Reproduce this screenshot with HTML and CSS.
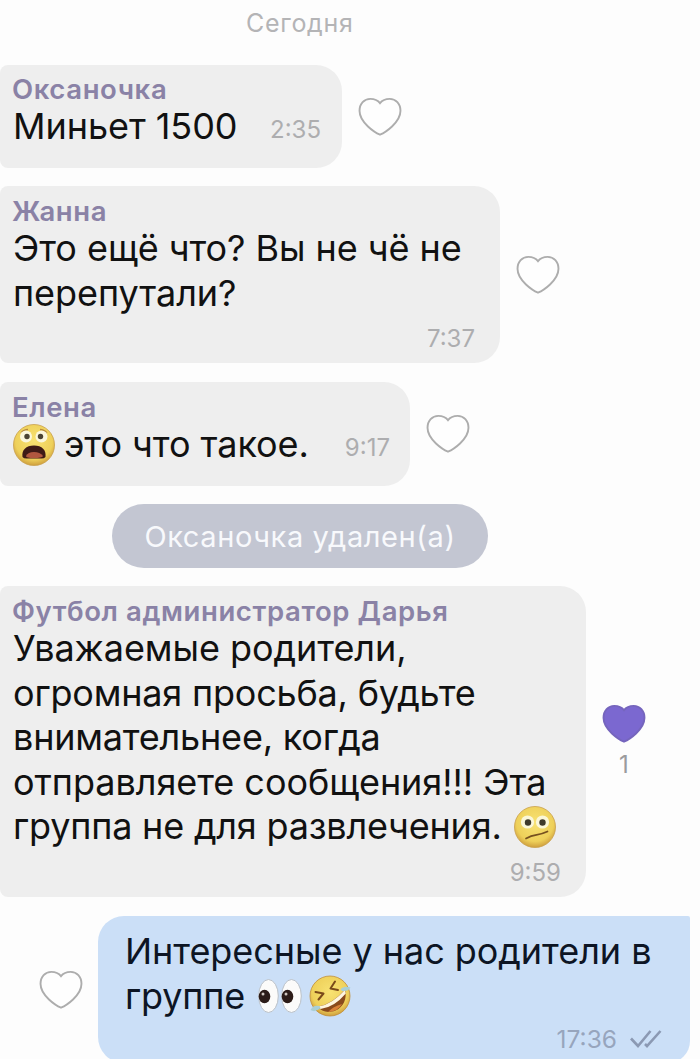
FILE: index.html
```html
<!DOCTYPE html>
<html lang="ru">
<head>
    <meta charset="UTF-8">
    <meta name="viewport" content="width=device-width, initial-scale=1.0">
    <title>Чат</title>
    <link rel="stylesheet" href="styles.css">
</head>
<body>
    <!-- shared icons -->
    <svg class="sprite" width="0" height="0">
        <symbol id="heart" viewBox="0 0 46 42">
            <path d="M23 39.500C18 37.500 1.500 27 1.500 14.500C1.500 7 6.500 2 12.800 2C17.500 2 20.500 3.200 23 6.500C25.500 3.200 28.500 2 33.200 2C39.500 2 44.500 7 44.500 14.500C44.500 27 28 37.500 23 39.500Z"/>
        </symbol>
        <radialGradient id="face" cx="50%" cy="40%" r="60%">
            <stop offset="0" stop-color="#f8e272"/>
            <stop offset="0.75" stop-color="#eed05a"/>
            <stop offset="1" stop-color="#cf9f3d"/>
        </radialGradient>
    </svg>

    <main class="chat">
        <div class="date">Сегодня</div>

        <div class="row row-1">
            <div class="bubble">
                <div class="name">Оксаночка</div>
                <div class="inline">
                    <p class="text"><span class="line">Миньет 1500</span></p>
                    <span class="time">2:35</span>
                </div>
            </div>
            <svg class="heart"><use href="#heart"/></svg>
        </div>

        <div class="row row-2">
            <div class="bubble">
                <div class="name">Жанна</div>
                <p class="text">
                    <span class="line">Это ещё что? Вы не чё не</span>
                    <span class="line">перепутали?</span>
                </p>
                <div class="time">7:37</div>
            </div>
            <svg class="heart"><use href="#heart"/></svg>
        </div>

        <div class="row row-3">
            <div class="bubble">
                <div class="name">Елена</div>
                <div class="inline">
                    <p class="text"><span class="line"><svg class="emoji scared" viewBox="0 0 42 42">
                        <circle cx="21" cy="21" r="20.500" fill="url(#face)" stroke="#c9a04a" stroke-width="0.800"/>
                        <path d="M8 9Q11 5.500 15 5.500M27 5.500Q31 5.500 34 9" fill="none" stroke="#b98b3c" stroke-width="1.400"/>
                        <circle cx="13" cy="12.500" r="6" fill="#fbf7dc"/>
                        <circle cx="28.500" cy="12.500" r="6" fill="#fbf7dc"/>
                        <circle cx="14" cy="12.500" r="2.700" fill="#4b4434"/>
                        <circle cx="27.500" cy="12.500" r="2.700" fill="#4b4434"/>
                        <path d="M9.500 33C8.500 26 13 21.500 21 21.500S33.500 26 32.500 33Q31 35 27 34.500H15Q11 35 9.500 33Z" fill="#3e1a16"/>
                        <path d="M13 32Q15 28 21 28T30 32Q29 34 21 34T13 32Z" fill="#b0573f"/>
                    </svg>это что такое.</span></p>
                    <span class="time">9:17</span>
                </div>
            </div>
            <svg class="heart"><use href="#heart"/></svg>
        </div>

        <div class="system"><span>Оксаночка удален(а)</span></div>

        <div class="row row-4">
            <div class="bubble">
                <div class="name">Футбол администратор Дарья</div>
                <p class="text">
                    <span class="line">Уважаемые родители,</span>
                    <span class="line tight">огромная просьба, будьте</span>
                    <span class="line tight">внимательнее, когда</span>
                    <span class="line">отправляете сообщения!!! Эта</span>
                    <span class="line tight">группа не для развлечения.<svg class="emoji unsure" viewBox="0 0 42 42">
                        <circle cx="21" cy="21" r="20.500" fill="url(#face)" stroke="#c9a04a" stroke-width="0.800"/>
                        <circle cx="13.500" cy="16" r="6.600" fill="#fbf7d8"/>
                        <circle cx="28.500" cy="16" r="6.600" fill="#fbf7d8"/>
                        <circle cx="14" cy="16.500" r="3.200" fill="#3f3a2b"/>
                        <circle cx="28.500" cy="16.500" r="3.200" fill="#3f3a2b"/>
                        <path d="M12 32.500Q17 29.500 22.500 28.800T33.500 25.500" fill="none" stroke="#76501f" stroke-width="1.700" stroke-linecap="round"/>
                    </svg></span>
                </p>
                <div class="time">9:59</div>
            </div>
            <div class="reaction">
                <svg class="heart liked"><use href="#heart"/></svg>
                <span class="count">1</span>
            </div>
        </div>

        <div class="row row-5 own">
            <svg class="heart"><use href="#heart"/></svg>
            <div class="bubble">
                <p class="text">
                    <span class="line">Интересные у нас родители в</span>
                    <span class="line tight">группе<svg class="emoji eyes" viewBox="0 0 44 36">
                        <ellipse cx="10.500" cy="18" rx="9.800" ry="16.500" fill="#fbfbfa" stroke="#b9c0c8" stroke-width="1"/>
                        <ellipse cx="33.500" cy="18" rx="9.800" ry="16.500" fill="#fbfbfa" stroke="#b9c0c8" stroke-width="1"/>
                        <ellipse cx="6.500" cy="18.500" rx="5.800" ry="6.800" fill="#2c1c18"/>
                        <ellipse cx="29.500" cy="18.500" rx="5.800" ry="6.800" fill="#2c1c18"/>
                        <circle cx="5" cy="16" r="1.500" fill="#cfc6c0"/>
                        <circle cx="28" cy="16" r="1.500" fill="#cfc6c0"/>
                    </svg><svg class="emoji rofl" viewBox="0 0 42 42">
                        <circle cx="21" cy="21" r="20" fill="url(#face)" stroke="#c08e3a" stroke-width="0.800"/>
                        <path d="M6.500 17L14.500 18.500L9.500 24.500M26 6.500L21.500 13.500L29 15" fill="none" stroke="#7a4a1a" stroke-width="2" stroke-linecap="round" stroke-linejoin="round"/>
                        <path d="M9 31.500Q23 29.500 36 14.500C38.500 24 34 32.500 26.500 35.500S12 36.500 9 31.500Z" fill="#8a4a1c"/>
                        <path d="M9.500 31.500Q23 29.500 35.800 15L36.800 18.500Q25 32.500 11.500 34Z" fill="#fff6df"/>
                        <path d="M19 37Q24 31.500 33 29Q29 36.500 19 37Z" fill="#d98038"/>
                        <path d="M31.500 14Q36 10.500 41.500 12.500Q39.500 16.500 33 16ZM10.500 31Q4 29.500 1.500 35Q6 38 11.500 33Z" fill="#a9cfd6"/>
                    </svg></span>
                </p>
                <div class="time">17:36
                    <svg class="checks" viewBox="0 0 34 20">
                        <path d="M2 9.500L9 17L21.500 2M16 15L18 17L31.500 2" fill="none" stroke="#8b99b3" stroke-width="2.600"/>
                    </svg>
                </div>
            </div>
        </div>
    </main>
</body>
</html>
```
FILE: styles.css
```css
* {
    box-sizing: border-box;
}
body {
    margin: 0;
    background-color: #fdfdfd;
    font-family: Inter, Roboto, sans-serif;
    color: #111;
    overflow: hidden;
}
.sprite {
    display: block;
}
.chat {
    width: 700px;
    height: 1059px;
    overflow: hidden;
    display: flex;
    flex-direction: column;
}
.date {
    height: 65px;
    flex-shrink: 0;
    padding: 8px 0 0 246px;
    font-size: 25px;
    line-height: 30px;
    letter-spacing: 0.7px;
    color: #b4b4b6;
}
.row {
    display: flex;
    align-items: center;
    gap: 16px;
    flex-shrink: 0;
}
.bubble {
    background-color: #eeeeee;
    border-radius: 8px 26px 26px 8px;
    padding: 10px 25px 0 13px;
    height: 100%;
    display: flex;
    flex-direction: column;
}
.name {
    font-size: 27.5px;
    line-height: 29px;
    font-weight: 600;
    letter-spacing: 0.6px;
    margin-left: -1px;
    color: #8a82a6;
    white-space: nowrap;
}
.text {
    margin: 0;
    font-size: 36px;
    line-height: 44.5px;
    letter-spacing: -0.05px;
}
.line {
    display: block;
    white-space: nowrap;
}
.tight {
    letter-spacing: -0.2px;
}
.inline {
    display: flex;
    justify-content: space-between;
    align-items: baseline;
}
.time {
    font-size: 24px;
    line-height: 30px;
    margin-top: 9px;
    color: #adadaf;
    align-self: flex-end;
}
.inline .time {
    align-self: auto;
    margin: 0;
    padding-bottom: 2px;
    position: relative;
    top: -1px;
}
.heart {
    width: 44px;
    height: 40px;
    flex-shrink: 0;
    fill: #fefefe;
    stroke: #adadad;
    stroke-width: 2px;
}
.heart.liked {
    fill: #7b68d0;
    stroke: #7565bd;
}
.reaction {
    display: flex;
    flex-direction: column;
    align-items: center;
}
.count {
    font-size: 24px;
    line-height: 30px;
    margin-top: 6px;
    color: #9b9b9d;
}
.emoji {
    width: 42px;
    height: 42px;
    overflow: visible;
}

/* messages */
.row-1 {
    height: 103px;
    margin-bottom: 18px;
}
.row-1 .bubble {
    width: 342px;
    padding-right: 21px;
}
.row-2 {
    height: 177px;
    margin-bottom: 19px;
}
.row-2 .bubble {
    width: 500px;
    padding-top: 11px;
}
.row-3 {
    height: 104px;
    margin-bottom: 18px;
}
.row-3 .bubble {
    width: 410px;
    padding-top: 11px;
    padding-right: 20px;
}
.row-4 {
    height: 311px;
    margin-bottom: 19px;
}
.row-4 .bubble {
    width: 586px;
    padding-top: 11px;
}
.row-4 .time {
    margin-top: 9px;
}
.row-5 {
    height: 147px;
    padding-left: 39px;
    gap: 15px;
}
.own .bubble {
    width: 592px;
    background-color: #cbdff7;
    border-radius: 26px 2px 22px 26px;
    padding: 13px 27px 0 27px;
    color: #0d1524;
}
.own .time {
    display: flex;
    align-items: center;
    margin-top: 6px;
    font-size: 24.5px;
    color: #97a5bd;
}
.checks {
    width: 34px;
    height: 20px;
    margin-left: 12px;
}
.scared {
    vertical-align: -9px;
    margin-right: 9px;
}
.unsure {
    vertical-align: -9px;
    margin-left: 12px;
}
.eyes {
    width: 44px;
    height: 36px;
    vertical-align: -5px;
    margin-left: 13px;
}
.rofl {
    vertical-align: -8px;
    margin-left: 7px;
}
.system {
    align-self: flex-start;
    flex-shrink: 0;
    width: 376px;
    height: 64px;
    margin: 0 0 18px 112px;
    border-radius: 32px;
    background-color: #c3c6d2;
    color: #f8f9fc;
    font-size: 29px;
    line-height: 65px;
    letter-spacing: 0.6px;
    text-align: center;
    white-space: nowrap;
}
```
